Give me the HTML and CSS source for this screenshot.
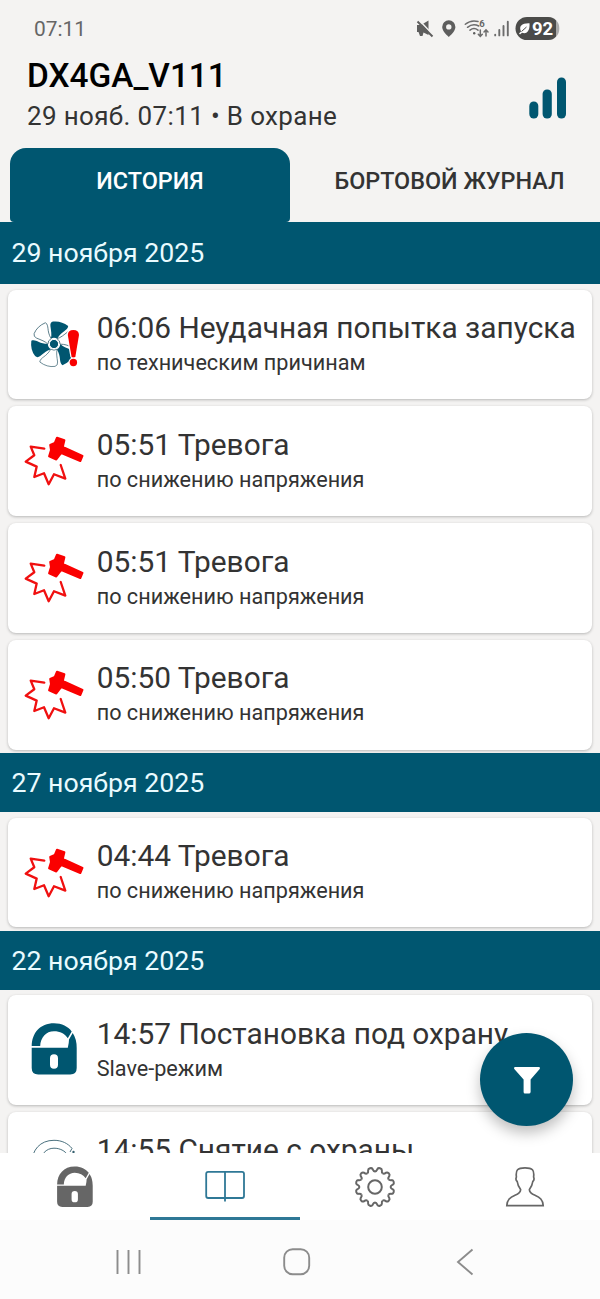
FILE: index.html
```html
<!DOCTYPE html>
<html lang="ru">
<head>
<meta charset="utf-8">
<title>DX4GA_V111</title>
<link rel="stylesheet" href="styles.css">
</head>
<body>
<svg class="defs" width="0" height="0" aria-hidden="true">
  <defs>
    <path id="blade" d="M-3.2-5.2C-2-9-3-13-3.6-18Q-4-21.5-1-22.4Q7-23.5 14.2-18C13.5-13 8-13.5 3.2-5.2Q0-7.2-3.2-5.2Z"/>
    <symbol id="fan" viewBox="-30 -30 60 60">
      <g fill="#005670"><use href="#blade"/><use href="#blade" transform="rotate(120)"/><use href="#blade" transform="rotate(240)"/></g>
      <g fill="#fff" stroke="#315b6b" stroke-width=".7"><use href="#blade" transform="rotate(60)"/><use href="#blade" transform="rotate(180)"/><use href="#blade" transform="rotate(300)"/></g>
      <circle r="4.6" fill="#005670" stroke="#fff" stroke-width="1"/>
      <g fill="#f80000" stroke="#fff" stroke-width="2.4" paint-order="stroke"><path d="M13.8-9Q14-14 19.4-14T25-9L21.4 12.5Q19.4 15 17.5 12.5Z"/><circle cx="19.4" cy="18.5" r="3.7"/></g>
    </symbol>
    <symbol id="hammer" viewBox="-30 -30 60 60">
      <path d="M-9.7-11.4L-23.3-13.4L-19.7-4.7L-28.3 1.6L-17.3 6.6L-19.7 17L-10 13.3L-5.3 24.3L0 14.3L11.3 18.6L6.7 5" fill="none" stroke="#f01010" stroke-width="2.3" stroke-linejoin="round" stroke-linecap="round"/>
      <path d="M3-22.3L10.4-19.8L8.8-13L28.5-4.2L26.3 1L7.3-7L2.3-.5L-4.9-3.6L-3-10L-3.8-15.2L.8-17.2Z" fill="#fa0000" stroke="#fa0000" stroke-width="2" stroke-linejoin="round"/>
    </symbol>
    <symbol id="lock" viewBox="-30 -30 60 60">
      <path fill="currentColor" fill-rule="evenodd" d="M-22.3-1.2H13.8Q15-6 15-9.5L18.7-16Q22.7-10 22.7-1.2V19Q22.7 25.5 16.2 25.5H-15.8Q-22.3 25.5-22.3 19ZM0 5.3Q-4 5.3-4 9.3V15.7Q-4 19.7 0 19.7T4 15.7V9.3Q4 5.3 0 5.3Z"/>
      <path fill="currentColor" d="M-22.3-2.9C-22-16-14-25.7 0-25.7C8-25.7 14-22.5 17.7-17.6L13.8-10.8C11-15.2 6-17.8 0-17.8C-8-17.8-13.5-11.5-13.8-2.9Z"/>
    </symbol>
    <symbol id="unlock" viewBox="-30 -30 60 60">
      <g fill="none" stroke="#35606f" stroke-width=".9"><path d="M-22.3-2.9C-22-16-14-25.7 0-25.7C8-25.7 14-22.5 18-17.6L16-14"/><path d="M-13.8-2.9C-13.5-11.5-8-17.8 0-17.8C6-17.8 11-15.2 13.8-10.8"/></g>
      <circle cx="19.5" cy="-14" r="1.2" fill="#35606f"/>
    </symbol>
    <path id="tooth" d="M-4.04-15.07C-2.6-15.5-2.6-16-2.3-18Q-1.9-19.4 0-19.4T2.3-18C2.6-16 2.6-15.5 4.04-15.07"/>
  </defs>
</svg>
<div class="screen">
  <header class="top">
    <div class="status">
      <span class="clock">07:11</span>
      <svg class="status-icons" viewBox="412 14 150 30" width="150" height="30">
        <g fill="#5e5e5e">
          <path d="M417 25H421L428.5 20.5V35L423.5 32.5L422.5 36H420L418.5 32H417Z"/>
          <path d="M419 20L435 37" stroke="#f4f3f2" stroke-width="1.6"/>
          <path d="M417.5 21.5L432.5 36.5" stroke="#5e5e5e" stroke-width="1.9"/>
          <path fill-rule="evenodd" d="M448.8 20.3A6.6 6.6 0 0 1 455.4 27C455.4 30.5 452 34 448.8 37C445.6 34 442.2 30.5 442.2 27A6.6 6.6 0 0 1 448.8 20.3ZM448.8 24.2A2.7 2.7 0 1 0 448.8 29.6A2.7 2.7 0 1 0 448.8 24.2Z"/>
          <circle cx="474.2" cy="33.2" r="1.2"/>
        </g>
        <g fill="none" stroke="#6c6c6c" stroke-width="1.5" stroke-linecap="round">
          <path d="M465.3 24.3Q471 19.5 478 21.5M467.5 27.3Q472.8 23 478.8 26M470 30.2Q474 27 478 30.2"/>
          <path d="M480.3 30V36M478.3 34.3L480.3 36.5L482.3 34.3M486 36V30.3M484 32L486 29.8L488 32"/>
          <path stroke-width="1.9" d="M495.2 34.6V35.4M499.3 30V35.4M503.5 26V35.4M507.8 21.8V35.4"/>
        </g>
        <text class="wifi-gen" x="479.3" y="27.2">6</text>
        <rect x="530" y="17" width="29.3" height="23" rx="11" fill="#aaa"/>
        <path d="M527 17H548Q553 17 556 20.5V36.5Q553 40 548 40H527A11.5 11.5 0 0 1 527 17Z" fill="#4b4b49"/>
        <path d="M519 33.5L521 31.5C518.5 26 522 23 529.5 23.3C530 30 527.5 34.5 522 32.8L520 34.5Z" fill="#fff"/>
        <path d="M521.5 31.5L526.5 27" stroke="#4b4b49"/>
        <text class="battery" x="532" y="35">92</text>
      </svg>
    </div>
    <div class="device">
      <div class="device-info">
        <h1 class="device-name">DX4GA_V111</h1>
        <p class="device-state">29 нояб. 07:11 • В охране</p>
      </div>
      <svg class="signal" viewBox="0 0 38 42" width="38" height="42" fill="#005670"><rect x=".3" y="24.5" width="9" height="17" rx="4.4"/><rect x="13.6" y="12.5" width="9.2" height="29" rx="4.4"/><rect x="28" y=".5" width="9" height="41" rx="4.4"/></svg>
    </div>
    <nav class="tabs">
      <a class="tab tab-active">ИСТОРИЯ</a>
      <a class="tab">БОРТОВОЙ ЖУРНАЛ</a>
    </nav>
  </header>

  <main class="feed">
    <h2 class="date date-first">29 ноября 2025</h2>
    <div class="group">
      <article class="card"><svg class="icon"><use href="#fan"/></svg><div class="body"><h3 class="title">06:06 Неудачная попытка запуска</h3><p class="note">по техническим причинам</p></div></article>
      <article class="card"><svg class="icon"><use href="#hammer"/></svg><div class="body"><h3 class="title">05:51 Тревога</h3><p class="note">по снижению напряжения</p></div></article>
      <article class="card"><svg class="icon"><use href="#hammer"/></svg><div class="body"><h3 class="title">05:51 Тревога</h3><p class="note">по снижению напряжения</p></div></article>
      <article class="card"><svg class="icon"><use href="#hammer"/></svg><div class="body"><h3 class="title">05:50 Тревога</h3><p class="note">по снижению напряжения</p></div></article>
    </div>
    <h2 class="date">27 ноября 2025</h2>
    <div class="group">
      <article class="card"><svg class="icon"><use href="#hammer"/></svg><div class="body"><h3 class="title">04:44 Тревога</h3><p class="note">по снижению напряжения</p></div></article>
    </div>
    <h2 class="date">22 ноября 2025</h2>
    <div class="group">
      <article class="card"><svg class="icon"><use href="#lock"/></svg><div class="body"><h3 class="title">14:57 Постановка под охрану</h3><p class="note">Slave-режим</p></div></article>
      <article class="card"><svg class="icon"><use href="#unlock"/></svg><div class="body"><h3 class="title">14:55 Снятие с охраны</h3></div></article>
    </div>
    <button class="filter" aria-label="Фильтр"><svg viewBox="0 0 28 28" width="28" height="28"><path d="M2 1H26Q27.8 1.3 26.7 3L17.6 13.5V26Q17.4 27.5 16 27.5H12Q10.6 27.5 10.6 26V13.5L1.3 3Q.2 1.3 2 1Z" fill="#fff"/></svg></button>
  </main>

  <nav class="bottom">
    <a class="item"><svg class="nav-lock"><use href="#lock"/></svg></a>
    <a class="item item-active"><svg viewBox="-22 -22 44 44" width="44" height="44" fill="none" stroke="#2f7896" stroke-width="1.8"><rect x="-18.8" y="-15.2" width="37.8" height="26.2" rx="2"/><path d="M0-15V14.5"/></svg></a>
    <a class="item"><svg viewBox="-22 -22 44 44" width="44" height="44" fill="none" stroke="#666" stroke-width="2"><circle r="6.8"/><use href="#tooth" transform="rotate(15)"/><use href="#tooth" transform="rotate(45)"/><use href="#tooth" transform="rotate(75)"/><use href="#tooth" transform="rotate(105)"/><use href="#tooth" transform="rotate(135)"/><use href="#tooth" transform="rotate(165)"/><use href="#tooth" transform="rotate(195)"/><use href="#tooth" transform="rotate(225)"/><use href="#tooth" transform="rotate(255)"/><use href="#tooth" transform="rotate(285)"/><use href="#tooth" transform="rotate(315)"/><use href="#tooth" transform="rotate(345)"/></svg></a>
    <a class="item"><svg viewBox="-22 -22 44 44" width="44" height="44" fill="none" stroke="#666" stroke-width="1.7"><path d="M-18.2 18.6H18.2C17.8 12.5 15 10.5 10 8.3C6 6.5 4.3 5 4.4 2.5C6.3 0 7.4-2 7.8-5.5Q9.8-7 8.6-10C9.5-17 7.5-19.2 0-19.2S-9.5-17-8.6-10Q-9.8-7-7.8-5.5C-7.4-2-6.3 0-4.4 2.5C-4.3 5-6 6.5-10 8.3C-15 10.5-17.8 12.5-18.2 18.6Z"/></svg></a>
  </nav>
  <div class="system">
    <svg viewBox="0 0 26 28" width="26" height="28"><path d="M1.5 2V26M12.5 2V26M23.5 2V26"/></svg>
    <svg class="home" viewBox="0 0 28 28" width="28" height="28"><rect x="1.2" y="1.2" width="25" height="25" rx="8.5"/></svg>
    <svg viewBox="0 0 18 28" width="18" height="28"><path d="M16.5 1.5L2 14L16.5 26.5"/></svg>
  </div>
</div>
</body>
</html>
```
FILE: styles.css
```css
* { box-sizing: border-box; }
body { margin: 0; font-family: Roboto, "Noto Sans", sans-serif; color: #333; }
h1, h2, h3, p { margin: 0; font-weight: 400; white-space: nowrap; }
.defs { position: absolute; }
.screen { width: 600px; height: 1299px; display: flex; flex-direction: column; overflow: hidden; background: #f4f3f2; }

.top { height: 222px; flex: none; display: flex; flex-direction: column; }
.status { height: 58px; padding: 14px 38px 0 34px; display: flex; justify-content: space-between; align-items: flex-start; }
.clock { font-size: 20.9px; line-height: 30px; color: #666; }
.status-icons { flex: none; }
.wifi-gen { font-size: 9.5px; font-weight: 700; fill: #666; }
.battery { font-size: 18.5px; font-weight: 700; fill: #fff; }
.device { height: 90px; padding: 0 33px 0 27px; display: flex; justify-content: space-between; }
.device-name { font-size: 33.4px; line-height: 36px; font-weight: 500; color: #000; }
.device-state { font-size: 26px; letter-spacing: .35px; line-height: 44px; }
.signal { margin-top: 19px; }
.tabs { height: 74px; padding: 0 10px; display: flex; }
.tab { width: 280px; flex: none; text-align: center; font-size: 23.4px; line-height: 66px; font-weight: 500; white-space: nowrap; }
.tab + .tab { width: 319px; }
.tab-active { background: #005670; color: #fff; border-radius: 16px 16px 4px 4px; }

.feed { flex: 1; min-height: 0; overflow: hidden; position: relative; }
.date { height: 59px; padding-left: 11.5px; background: #005670; color: #e9fbff; font-size: 26.7px; line-height: 61px; }
.date-first { height: 62.3px; line-height: 62px; }
.group { display: flex; flex-direction: column; gap: 7px; padding: 5.5px 8.3px 3.5px; }
.card { height: 109.7px; padding: 0 0 0 15.7px; display: flex; background: #fff; border-radius: 8px; box-shadow: 0 1px 3px rgba(0,0,0,.25); }
.icon { width: 60px; height: 60px; flex: none; margin-top: 24px; color: #005670; }
.body { padding: 20.4px 0 0 12.7px; }
.title { font-size: 29.85px; line-height: 36px; }
.note { font-size: 21.65px; line-height: 34px; }
.filter { position: absolute; right: 27px; bottom: 27px; width: 93px; height: 93px; border: 0; border-radius: 50%; background: #005670; display: flex; align-items: center; justify-content: center; box-shadow: 0 7px 14px rgba(0,0,0,.25); }

.bottom { height: 67px; flex: none; display: flex; background: #fff; }
.item { width: 150px; display: flex; justify-content: center; padding-top: 12px; border-bottom: 3px solid transparent; color: #666; }
.item-active { border-color: #2f7896; }
.nav-lock { width: 47.5px; height: 47.5px; margin-top: -2px; }
.system { height: 79px; flex: none; padding: 28px 126px 0 116px; display: flex; justify-content: space-between; background: #fcfcfc; }
.system svg { fill: none; stroke: #8c8c8c; stroke-width: 1.9; }
.system .home { margin-right: 5px; }
```
